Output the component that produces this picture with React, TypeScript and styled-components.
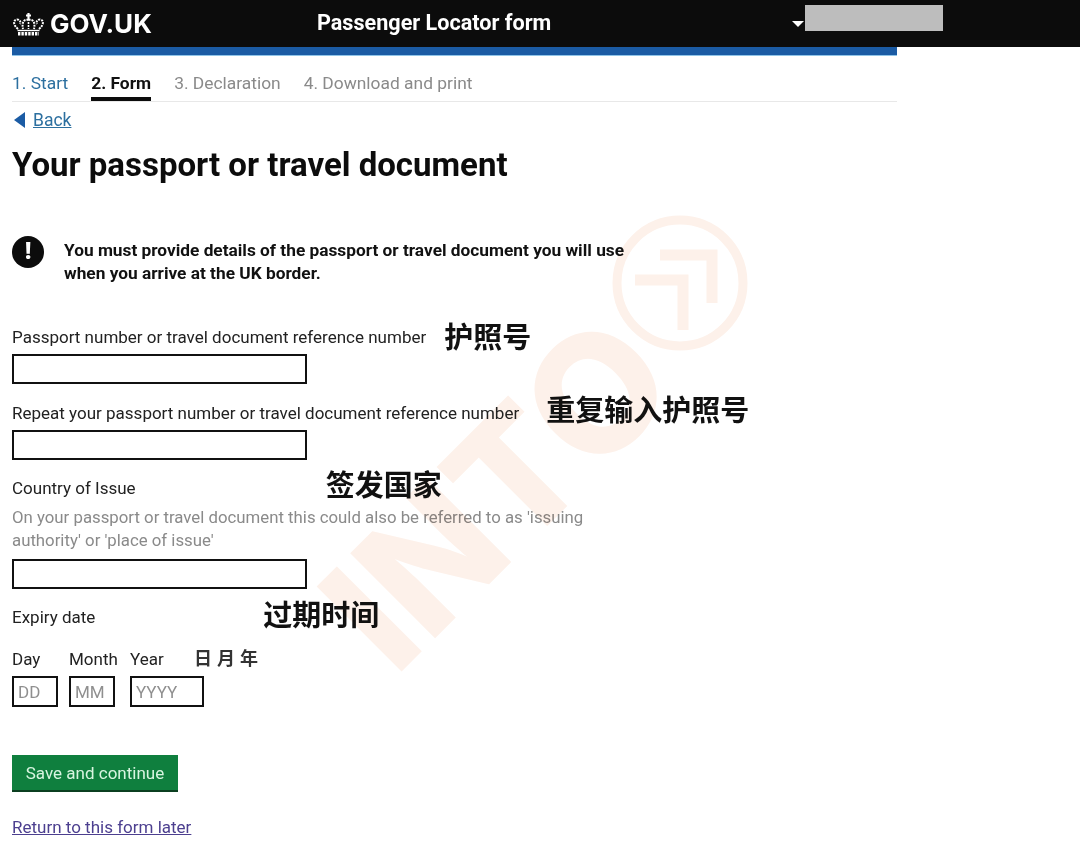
import React from 'react';
import styled, { createGlobalStyle } from 'styled-components';

const GlobalStyle = createGlobalStyle`
  html, body {
    margin: 0;
    padding: 0;
    background: #fff;
  }
  body {
    font-family: "Roboto", "Noto Sans CJK SC", sans-serif;
    color: #222;
  }
`;

const Page = styled.div`
  position: relative;
  width: 1080px;
  height: 861px;
  overflow: hidden;
`;

const Header = styled.header`
  display: flex;
  align-items: center;
  height: 47px;
  padding-left: 12px;
  background: #0c0c0c;
  color: #fff;
`;

const Logo = styled.div`
  display: flex;
  align-items: center;
  gap: 5px;
  width: 305px;
  font-family: "Inter", sans-serif;
  font-size: 26px;
  font-weight: 700;
`;

const ServiceName = styled.div`
  width: 475px;
  margin-top: -3px;
  font-size: 21.6px;
  font-weight: 700;
`;

const Caret = styled.span`
  width: 0;
  height: 0;
  margin-right: 1px;
  border-left: 6px solid transparent;
  border-right: 6px solid transparent;
  border-top: 6px solid #fff;
`;

const RedactedUser = styled.div`
  width: 138px;
  height: 26px;
  margin-top: -11px;
  background: #bdbdbd;
`;

const Main = styled.main`
  width: 885px;
  margin-left: 12px;
`;

const BlueBar = styled.div`
  height: 8px;
  background: #1b5ba4;
  border-bottom: 1px solid #8fc4e8;
`;

const Steps = styled.nav`
  display: flex;
  gap: 23px;
  height: 45px;
  border-bottom: 1px solid #e8e8e8;
  font-size: 17.4px;
`;

const Step = styled.a<{ $state: 'done' | 'active' | 'todo' }>`
  box-sizing: border-box;
  height: 45px;
  padding-top: 15px;
  line-height: 24px;
  color: ${(p) => (p.$state === 'done' ? '#2c6f9f' : p.$state === 'active' ? '#111' : '#8a8a8a')};
  font-weight: ${(p) => (p.$state === 'active' ? 700 : 400)};
  border-bottom: ${(p) => (p.$state === 'active' ? '4px solid #0c0c0c' : 'none')};
`;

const BackRow = styled.div`
  display: flex;
  align-items: center;
  gap: 8px;
  height: 24px;
  margin-top: 6px;
  padding-left: 2px;
  font-size: 17.5px;
`;

const BackArrow = styled.span`
  width: 0;
  height: 0;
  border-top: 8px solid transparent;
  border-bottom: 8px solid transparent;
  border-right: 11px solid #1b5ba4;
`;

const BackLink = styled.a`
  color: #2c6f9f;
  text-decoration: underline;
`;

const Title = styled.h1`
  margin: 13px 0 0;
  font-size: 33px;
  line-height: 40px;
  font-weight: 700;
  color: #0c0c0c;
`;

const Warning = styled.div`
  display: flex;
  gap: 20px;
  margin-top: 51px;
`;

const WarningIcon = styled.div`
  flex: none;
  width: 32px;
  height: 32px;
  border-radius: 50%;
  background: #0c0c0c;
  color: #fff;
  font-size: 24px;
  font-weight: 900;
  line-height: 31px;
  text-align: center;
`;

const WarningText = styled.p`
  width: 590px;
  margin: 3px 0 0;
  font-size: 17.3px;
  line-height: 23px;
  font-weight: 700;
  color: #111;
`;

const LabelRow = styled.div<{ $top: number }>`
  display: flex;
  align-items: center;
  height: 24px;
  margin-top: ${(p) => p.$top}px;
  font-size: 17px;
`;

const Note = styled.span<{ $left: number; $lift: number }>`
  margin-left: ${(p) => p.$left}px;
  margin-top: -${(p) => p.$lift}px;
  font-family: "Noto Sans CJK SC", sans-serif;
  font-size: 29px;
  font-weight: 700;
  line-height: 24px;
  color: #111;
`;

const SmallNote = styled.span`
  margin-left: 30px;
  margin-top: -4px;
  font-family: "Noto Sans CJK SC", sans-serif;
  font-size: 18px;
  font-weight: 700;
  letter-spacing: 5px;
  color: #333;
`;

const Hint = styled.p`
  width: 600px;
  margin: 6px 0 7px;
  font-size: 16.8px;
  line-height: 23px;
  color: #8a8a8a;
`;

const TextInput = styled.input<{ $width: number; $gap?: number }>`
  box-sizing: border-box;
  display: block;
  width: ${(p) => p.$width}px;
  height: 30px;
  margin-top: ${(p) => p.$gap ?? 0}px;
  padding: 0 4px;
  border: 2px solid #111;
  border-radius: 0;
  background: transparent;
  font-family: inherit;
  font-size: 17px;
  &::placeholder {
    color: #8f8f8f;
    opacity: 1;
  }
`;

const DateRow = styled.div`
  display: flex;
  margin-top: 5px;
`;

const DateField = styled.div<{ $width: number }>`
  width: ${(p) => p.$width}px;
`;

const DateInput = styled(TextInput)`
  height: 31px;
`;

const SaveButton = styled.button`
  display: block;
  width: 166px;
  height: 37px;
  margin-top: 48px;
  padding: 0;
  border: 0;
  border-bottom: 2px solid #0b3f20;
  background: #0f7f3e;
  color: #d8f5e0;
  font-family: inherit;
  font-size: 17px;
`;

const ReturnLink = styled.a`
  display: block;
  margin-top: 23px;
  font-size: 17px;
  line-height: 24px;
  color: #4c3f8f;
  text-decoration: underline;
`;

const Watermark = styled.div`
  position: absolute;
  inset: 0;
  pointer-events: none;
  mix-blend-mode: multiply;
`;

const WatermarkWord = styled.span`
  position: absolute;
  left: 497px;
  top: 492px;
  font-family: "Inter", sans-serif;
  font-size: 165px;
  font-weight: 800;
  line-height: 165px;
  color: #fdf1ea;
  transform: translate(-50%, -50%) rotate(-45deg);
`;

const WatermarkMark = styled.svg`
  position: absolute;
  left: 605px;
  top: 205px;
`;

const Crown = () => (
  <svg width="33" height="24" viewBox="0 0 33 24" fill="none" stroke="#fff">
    <path d="M16.5 1 V7 M14 3.5 H19" strokeWidth="2.2" />
    <path d="M6 17 C1 13 1 8 5 7.5 C8 7.5 9 10 8 12" strokeWidth="2" strokeDasharray="2 1" />
    <path d="M27 17 C32 13 32 8 28 7.5 C25 7.5 24 10 25 12" strokeWidth="2" strokeDasharray="2 1" />
    <path d="M16.5 8 C12 7 9.5 10 11 17 M16.5 8 C21 7 23.5 10 22 17" strokeWidth="2" strokeDasharray="2 1" />
    <path d="M16.5 10 V17" strokeWidth="1.6" strokeDasharray="2 1" />
    <path d="M5.5 18.5 H27.5" strokeWidth="1.4" />
    <path d="M6 21.8 H27" strokeWidth="3.6" strokeDasharray="2.4 1" />
  </svg>
);

const App: React.FC = () => (
  <Page>
    <GlobalStyle />
    <Header>
      <Logo>
        <Crown />
        GOV.UK
      </Logo>
      <ServiceName>Passenger Locator form</ServiceName>
      <Caret />
      <RedactedUser />
    </Header>
    <Main>
      <BlueBar />
      <Steps>
        <Step $state="done">1. Start</Step>
        <Step $state="active">2. Form</Step>
        <Step $state="todo">3. Declaration</Step>
        <Step $state="todo">4. Download and print</Step>
      </Steps>
      <BackRow>
        <BackArrow />
        <BackLink>Back</BackLink>
      </BackRow>
      <Title>Your passport or travel document</Title>
      <Warning>
        <WarningIcon>!</WarningIcon>
        <WarningText>
          You must provide details of the passport or travel document you will use when you arrive at the UK border.
        </WarningText>
      </Warning>

      <LabelRow $top={40}>
        Passport number or travel document reference number
        <Note $left={18} $lift={4}>护照号</Note>
      </LabelRow>
      <TextInput $width={295} $gap={5} />

      <LabelRow $top={17}>
        Repeat your passport number or travel document reference number
        <Note $left={27} $lift={10}>重复输入护照号</Note>
      </LabelRow>
      <TextInput $width={295} $gap={5} />

      <LabelRow $top={16}>
        Country of Issue
        <Note $left={190} $lift={10}>签发国家</Note>
      </LabelRow>
      <Hint>On your passport or travel document this could also be referred to as 'issuing authority' or 'place of issue'</Hint>
      <TextInput $width={295} />

      <LabelRow $top={16}>
        Expiry date
        <Note $left={168} $lift={8}>过期时间</Note>
      </LabelRow>

      <LabelRow $top={18}>
        <DateField $width={57}>Day</DateField>
        <DateField $width={61}>Month</DateField>
        <DateField $width={34}>Year</DateField>
        <SmallNote>日月年</SmallNote>
      </LabelRow>
      <DateRow>
        <DateField $width={57}><DateInput $width={46} placeholder="DD" /></DateField>
        <DateField $width={61}><DateInput $width={46} placeholder="MM" /></DateField>
        <DateField $width={74}><DateInput $width={74} placeholder="YYYY" /></DateField>
      </DateRow>

      <SaveButton>Save and continue</SaveButton>
      <ReturnLink>Return to this form later</ReturnLink>
    </Main>

    <Watermark>
      <WatermarkWord>INTO</WatermarkWord>
      <WatermarkMark width="150" height="160" viewBox="0 0 150 160" fill="none" stroke="#fdf1ea" strokeWidth="9">
        <circle cx="75" cy="78" r="63" />
        <path d="M55 50 H107 V98" strokeWidth="11" />
        <path d="M30 75 H78 V125" strokeWidth="11" />
      </WatermarkMark>
    </Watermark>
  </Page>
);

export default App;
